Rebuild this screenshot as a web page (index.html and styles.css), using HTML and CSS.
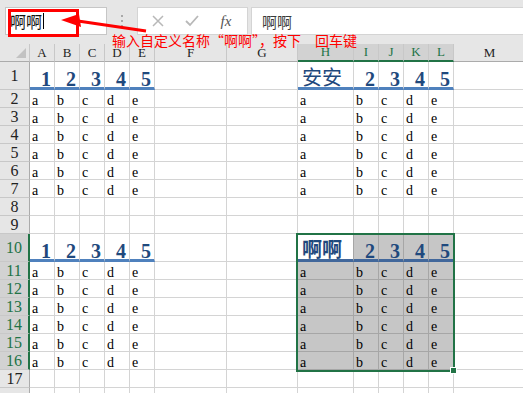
FILE: index.html
```html
<!DOCTYPE html>
<html lang="zh-CN">
<head>
  <meta charset="UTF-8" />
  <title>Excel 自定义名称</title>
  <link rel="stylesheet" href="styles.css">
</head>
<body>

  <div class="topbar">
    <div class="namebox">啊啊<span class="caret"></span></div>
    <div class="sep">
      <svg width="3" height="12" viewBox="0 0 3 12"><rect x="0" y="0" width="2" height="2" fill="#a8a8a8"/><rect x="0" y="5" width="2" height="2" fill="#a8a8a8"/><rect x="0" y="10" width="2" height="2" fill="#a8a8a8"/></svg>
    </div>
    <div class="fxbtns">
      <span class="btn"><svg width="12" height="12" viewBox="0 0 12 12"><path d="M1 1 L11 11 M11 1 L1 11" stroke="#b8b8b8" stroke-width="1.5" fill="none"/></svg></span>
      <span class="btn"><svg width="14" height="12" viewBox="0 0 14 12"><path d="M1 6 L5 10 L13 1" stroke="#b8b8b8" stroke-width="1.8" fill="none"/></svg></span>
      <span class="btn fx">fx</span>
    </div>
    <div class="formula">啊啊</div>
  </div>

  <div class="sheet">
    <div class="row hdr"><div class="corner"></div><div>A</div><div>B</div><div>C</div><div>D</div><div>E</div><div>F</div><div>G</div><div class="hsel">H</div><div class="hsel">I</div><div class="hsel">J</div><div class="hsel">K</div><div class="hsel">L</div><div>M</div></div>

    <div class="row tall"><div class="rh">1</div><div class="c n">1</div><div class="c n">2</div><div class="c n">3</div><div class="c n">4</div><div class="c n">5</div><div class="c"></div><div class="c"></div><div class="c n cj">安安</div><div class="c n">2</div><div class="c n">3</div><div class="c n">4</div><div class="c n">5</div><div class="c"></div></div>
    <div class="row"><div class="rh">2</div><div class="c">a</div><div class="c">b</div><div class="c">c</div><div class="c">d</div><div class="c">e</div><div class="c"></div><div class="c"></div><div class="c">a</div><div class="c">b</div><div class="c">c</div><div class="c">d</div><div class="c">e</div><div class="c"></div></div>
    <div class="row"><div class="rh">3</div><div class="c">a</div><div class="c">b</div><div class="c">c</div><div class="c">d</div><div class="c">e</div><div class="c"></div><div class="c"></div><div class="c">a</div><div class="c">b</div><div class="c">c</div><div class="c">d</div><div class="c">e</div><div class="c"></div></div>
    <div class="row"><div class="rh">4</div><div class="c">a</div><div class="c">b</div><div class="c">c</div><div class="c">d</div><div class="c">e</div><div class="c"></div><div class="c"></div><div class="c">a</div><div class="c">b</div><div class="c">c</div><div class="c">d</div><div class="c">e</div><div class="c"></div></div>
    <div class="row"><div class="rh">5</div><div class="c">a</div><div class="c">b</div><div class="c">c</div><div class="c">d</div><div class="c">e</div><div class="c"></div><div class="c"></div><div class="c">a</div><div class="c">b</div><div class="c">c</div><div class="c">d</div><div class="c">e</div><div class="c"></div></div>
    <div class="row"><div class="rh">6</div><div class="c">a</div><div class="c">b</div><div class="c">c</div><div class="c">d</div><div class="c">e</div><div class="c"></div><div class="c"></div><div class="c">a</div><div class="c">b</div><div class="c">c</div><div class="c">d</div><div class="c">e</div><div class="c"></div></div>
    <div class="row"><div class="rh">7</div><div class="c">a</div><div class="c">b</div><div class="c">c</div><div class="c">d</div><div class="c">e</div><div class="c"></div><div class="c"></div><div class="c">a</div><div class="c">b</div><div class="c">c</div><div class="c">d</div><div class="c">e</div><div class="c"></div></div>
    <div class="row"><div class="rh">8</div><div class="c"></div><div class="c"></div><div class="c"></div><div class="c"></div><div class="c"></div><div class="c"></div><div class="c"></div><div class="c"></div><div class="c"></div><div class="c"></div><div class="c"></div><div class="c"></div><div class="c"></div></div>
    <div class="row"><div class="rh">9</div><div class="c"></div><div class="c"></div><div class="c"></div><div class="c"></div><div class="c"></div><div class="c"></div><div class="c"></div><div class="c"></div><div class="c"></div><div class="c"></div><div class="c"></div><div class="c"></div><div class="c"></div></div>

    <div class="row tall"><div class="rh rsel">10</div><div class="c n">1</div><div class="c n">2</div><div class="c n">3</div><div class="c n">4</div><div class="c n">5</div><div class="c"></div><div class="c"></div><div class="c n cj sel act bold">啊啊</div><div class="c n sel">2</div><div class="c n sel">3</div><div class="c n sel">4</div><div class="c n sel">5</div><div class="c"></div></div>
    <div class="row"><div class="rh rsel">11</div><div class="c">a</div><div class="c">b</div><div class="c">c</div><div class="c">d</div><div class="c">e</div><div class="c"></div><div class="c"></div><div class="c sel">a</div><div class="c sel">b</div><div class="c sel">c</div><div class="c sel">d</div><div class="c sel">e</div><div class="c"></div></div>
    <div class="row"><div class="rh rsel">12</div><div class="c">a</div><div class="c">b</div><div class="c">c</div><div class="c">d</div><div class="c">e</div><div class="c"></div><div class="c"></div><div class="c sel">a</div><div class="c sel">b</div><div class="c sel">c</div><div class="c sel">d</div><div class="c sel">e</div><div class="c"></div></div>
    <div class="row"><div class="rh rsel">13</div><div class="c">a</div><div class="c">b</div><div class="c">c</div><div class="c">d</div><div class="c">e</div><div class="c"></div><div class="c"></div><div class="c sel">a</div><div class="c sel">b</div><div class="c sel">c</div><div class="c sel">d</div><div class="c sel">e</div><div class="c"></div></div>
    <div class="row"><div class="rh rsel">14</div><div class="c">a</div><div class="c">b</div><div class="c">c</div><div class="c">d</div><div class="c">e</div><div class="c"></div><div class="c"></div><div class="c sel">a</div><div class="c sel">b</div><div class="c sel">c</div><div class="c sel">d</div><div class="c sel">e</div><div class="c"></div></div>
    <div class="row"><div class="rh rsel">15</div><div class="c">a</div><div class="c">b</div><div class="c">c</div><div class="c">d</div><div class="c">e</div><div class="c"></div><div class="c"></div><div class="c sel">a</div><div class="c sel">b</div><div class="c sel">c</div><div class="c sel">d</div><div class="c sel">e</div><div class="c"></div></div>
    <div class="row"><div class="rh rsel">16</div><div class="c">a</div><div class="c">b</div><div class="c">c</div><div class="c">d</div><div class="c">e</div><div class="c"></div><div class="c"></div><div class="c sel">a</div><div class="c sel">b</div><div class="c sel">c</div><div class="c sel">d</div><div class="c sel">e</div><div class="c"></div></div>
    <div class="row"><div class="rh">17</div><div class="c"></div><div class="c"></div><div class="c"></div><div class="c"></div><div class="c"></div><div class="c"></div><div class="c"></div><div class="c"></div><div class="c"></div><div class="c"></div><div class="c"></div><div class="c"></div><div class="c"></div></div>
    <div class="row"><div class="rh"></div><div class="c"></div><div class="c"></div><div class="c"></div><div class="c"></div><div class="c"></div><div class="c"></div><div class="c"></div><div class="c"></div><div class="c"></div><div class="c"></div><div class="c"></div><div class="c"></div><div class="c"></div></div>

    <!-- selected range H10:L16 -->
    <div class="selbox"></div>
    <div class="handle"></div>
  </div>

  <!-- annotation -->
  <div class="callout"></div>
  <svg class="arrow" width="160" height="40" viewBox="0 0 160 40">
    <path d="M78 21 L146 31" stroke="#f00" stroke-width="3" fill="none"/>
    <polygon points="61,20 79,14 81,27" fill="#f00"/>
  </svg>
  <div class="note">输入自定义名称“啊啊”，按下　回车键</div>

</body>
</html>
```

FILE: styles.css
```css
body {
  margin: 0;
  width: 523px;
  height: 393px;
  overflow: hidden;
  position: relative;
  background: #fff;
  font-family: "Liberation Serif", "Noto Sans CJK SC", serif;
  color: #000;
}
.topbar {
  height: 44px;
  box-sizing: border-box;
  padding-top: 7px;
  background: #e6e6e6;
  display: flex;
  align-items: flex-start;
}
.namebox {
  margin-left: 5px;
  width: 102px;
  height: 28px;
  box-sizing: border-box;
  background: #fff;
  border: 1px solid #c6c6c6;
  display: flex;
  align-items: center;
  padding-left: 4px;
  font: 16px "Noto Sans CJK SC", sans-serif;
  color: #111;
}
.caret {
  display: inline-block;
  width: 1px;
  height: 16px;
  margin-left: 1px;
  background: #000;
}
.sep {
  width: 30px;
  height: 28px;
  display: flex;
  justify-content: center;
  align-items: center;
}
.fxbtns {
  width: 111px;
  height: 28px;
  box-sizing: border-box;
  background: #fff;
  border: 1px solid #d4d4d4;
  display: flex;
  align-items: center;
  padding-left: 3px;
}
.btn {
  width: 34px;
  display: flex;
  justify-content: center;
  align-items: center;
}
.fx {
  font: italic 15px "Liberation Serif", serif;
  color: #555;
}
.formula {
  flex: 1;
  margin-left: 3px;
  height: 28px;
  box-sizing: border-box;
  background: #fff;
  border: 1px solid #d4d4d4;
  border-right: none;
  padding-left: 10px;
  display: flex;
  align-items: center;
  font: 15px "Noto Sans CJK SC", sans-serif;
  color: #3a3a3a;
}

/* sheet grid */
.sheet {
  position: relative;
}
.row {
  display: grid;
  grid-template-columns: 30px 25px 25px 25px 25px 25px 72px 71px 56px 25px 25px 25px 25px 72px;
  height: 18px;
}
.row.tall {
  height: 28px;
}
.row > div {
  box-sizing: border-box;
  border-right: 1px solid #d4d4d4;
  border-bottom: 1px solid #d4d4d4;
  overflow: hidden;
  white-space: nowrap;
}
.hdr > div {
  background: #e6e6e6;
  border-right-color: #c8c8c8;
  border-bottom-color: #ababab;
  display: flex;
  justify-content: center;
  align-items: center;
  font-size: 13px;
  color: #222;
}
.hdr > .hsel {
  background: #d2d2d2;
  color: #217346;
  border-bottom: 2px solid #217346;
}
.corner {
  position: relative;
}
.corner::after {
  content: "";
  position: absolute;
  right: 3px;
  bottom: 3px;
  border-left: 10px solid transparent;
  border-bottom: 10px solid #c2c2c2;
}
.row > .rh {
  background: #e6e6e6;
  border-right-color: #ababab;
  border-bottom-color: #c8c8c8;
  display: flex;
  justify-content: center;
  align-items: center;
  font-size: 16px;
  color: #222;
}
.row > .rsel {
  background: #d2d2d2;
  color: #217346;
  border-right: 2px solid #217346;
}
.c {
  display: flex;
  align-items: flex-end;
  padding-left: 2px;
  font-size: 14px;
  line-height: 12px;
}
.row > .n {
  justify-content: flex-end;
  padding-left: 0;
  padding-right: 3px;
  font-size: 20px;
  font-weight: bold;
  line-height: 16px;
  color: #1f497d;
  border-bottom: 3px solid #4f81bd;
}
.row > .cj {
  justify-content: flex-start;
  padding-left: 4px;
  padding-bottom: 2px;
  font-family: "Noto Sans CJK SC", sans-serif;
  font-weight: normal;
}
.row > .bold {
  font-weight: bold;
}
.row > .sel {
  background: #c6c6c6;
  border-right-color: #a6a6a6;
  border-bottom-color: #a6a6a6;
}
.row > .sel.n {
  border-bottom-color: #41679b;
}
.row > .act {
  background: #fff;
}
.selbox {
  position: absolute;
  left: 296px;
  top: 189px;
  width: 159px;
  height: 139px;
  box-sizing: border-box;
  border: 2px solid #217346;
}
.handle {
  position: absolute;
  left: 450px;
  top: 323px;
  width: 5px;
  height: 5px;
  background: #217346;
  border: 1px solid #fff;
}

/* red annotation */
.callout {
  position: absolute;
  left: 8px;
  top: 9px;
  width: 71px;
  height: 28px;
  box-sizing: border-box;
  border: 3px solid #f00;
}
.arrow {
  position: absolute;
  left: 0;
  top: 0;
}
.note {
  position: absolute;
  left: 112px;
  top: 31px;
  font: 14px "Noto Sans CJK SC", sans-serif;
  line-height: 18px;
  color: #f00;
  white-space: pre;
}
```
